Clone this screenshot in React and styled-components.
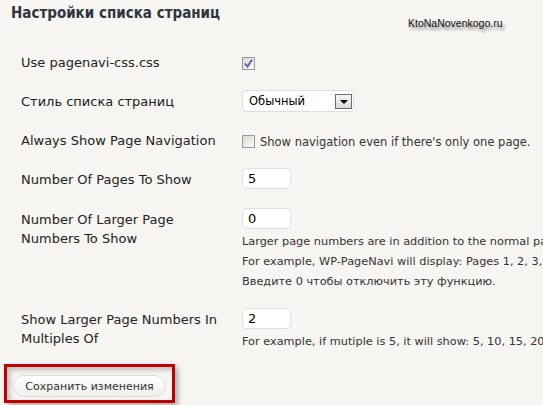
import React from 'react';
import styled, { createGlobalStyle } from 'styled-components';

const GlobalStyle = createGlobalStyle`
  html, body {
    margin: 0;
    padding: 0;
    background: #f6f5f1;
  }
  body {
    font-family: "DejaVu Sans", Verdana, sans-serif;
    color: #222;
    width: 543px;
    height: 405px;
    overflow: hidden;
  }
`;

const Page = styled.div`
  position: relative;
  height: 405px;
  padding-top: 3px;
  box-sizing: border-box;
`;

const Title = styled.h2`
  margin: 0 0 0 11px;
  font-family: "DejaVu Sans Condensed", "DejaVu Sans", Verdana, sans-serif;
  font-stretch: condensed;
  font-size: 15px;
  line-height: 20px;
  font-weight: bold;
  color: #2f3640;
`;

// watermark laid over the page
const Watermark = styled.div`
  position: absolute;
  left: 408px;
  top: 17px;
  font-family: "Liberation Sans", Arial, sans-serif;
  font-size: 10.5px;
  color: #111;
  text-shadow: 2px 3px 3px rgba(0, 0, 0, 0.45);
`;

const Table = styled.div`
  margin-top: 20px;
  padding-left: 21px;
`;

const Row = styled.div`
  display: grid;
  grid-template-columns: 221px 1fr;
  padding: 10px 0 6px;
`;

const Label = styled.div`
  font-size: 13px;
  line-height: 19px;
  padding-top: ${p => p.$offset ?? 2}px;
  color: #222;
`;

const Cell = styled.div`
  min-width: 0;
  white-space: nowrap;
`;

const CheckLine = styled.div`
  display: flex;
  align-items: center;
  gap: 5px;
  height: 21px;
  font-size: 11.5px;
  color: #333;
`;

const Box = styled.span`
  display: inline-flex;
  align-items: center;
  justify-content: center;
  width: 13px;
  height: 13px;
  box-sizing: border-box;
  border: 1px solid #999;
  background: linear-gradient(135deg, #d8d8d2, #fbfbf9);
`;

const Select = styled.div`
  display: flex;
  align-items: center;
  justify-content: space-between;
  width: 112px;
  height: 22px;
  box-sizing: border-box;
  border: 1px solid #dedede;
  border-radius: 4px;
  background: #fff;
  padding-left: 6px;
  margin-bottom: 3px;
  font-size: 11.5px;
  color: #000;
`;

const Arrow = styled.span`
  display: flex;
  align-items: center;
  justify-content: center;
  width: 17px;
  height: 15px;
  box-sizing: border-box;
  margin-right: 1px;
  border: 1px solid #6c6c6c;
  background: linear-gradient(#f6f6f6, #dadada);

  &::after {
    content: '';
    margin-top: 2px;
    border-left: 4px solid transparent;
    border-right: 4px solid transparent;
    border-top: 4px solid #000;
  }
`;

const Input = styled.input`
  display: block;
  width: 49px;
  height: 21px;
  box-sizing: border-box;
  border: 1px solid #dfdfdf;
  border-radius: 4px;
  background: #fff;
  padding: 0 5px;
  margin: 0 0 3px;
  font-family: "DejaVu Sans", Verdana, sans-serif;
  font-size: 13px;
  color: #000;
  outline: none;
`;

const Desc = styled.div`
  font-size: 11.3px;
  line-height: 20px;
  color: #333;
`;

const Frame = styled.div`
  margin: 6px 0 0 4px;
  width: 171px;
  height: 39px;
  box-sizing: border-box;
  border: 3px solid #bd0000;
  padding: 8px 0 0 6px;
  box-shadow: 3px 3px 5px rgba(0, 0, 0, 0.3), inset 3px 3px 5px rgba(0, 0, 0, 0.22);
`;

const Button = styled.button`
  display: block;
  width: 153px;
  height: 22px;
  box-sizing: border-box;
  border: 1px solid #dcdcd8;
  border-radius: 11px;
  background: linear-gradient(#ffffff, #efefeb);
  padding: 0;
  font-family: "DejaVu Sans", Verdana, sans-serif;
  font-size: 11px;
  color: #333;
`;

const Check = () => (
  <svg width="9" height="9" viewBox="0 0 9 9">
    <path d="M1 4.5 L3.5 7.5 L8 0.8" fill="none" stroke="#4a5ea6" strokeWidth="1.8" />
  </svg>
);

export default function App() {
  return (
    <Page>
      <GlobalStyle />
      <Title>Настройки списка страниц</Title>
      <Watermark>KtoNaNovenkogo.ru</Watermark>
      <Table>
        <Row>
          <Label $offset={0}>Use pagenavi-css.css</Label>
          <Cell>
            <CheckLine>
              <Box><Check /></Box>
            </CheckLine>
          </Cell>
        </Row>
        <Row>
          <Label>Стиль списка страниц</Label>
          <Cell>
            <Select>
              Обычный
              <Arrow />
            </Select>
          </Cell>
        </Row>
        <Row>
          <Label $offset={0}>Always Show Page Navigation</Label>
          <Cell>
            <CheckLine>
              <Box />
              Show navigation even if there's only one page.
            </CheckLine>
          </Cell>
        </Row>
        <Row>
          <Label>Number Of Pages To Show</Label>
          <Cell>
            <Input readOnly value="5" />
          </Cell>
        </Row>
        <Row>
          <Label>Number Of Larger Page<br />Numbers To Show</Label>
          <Cell>
            <Input readOnly value="0" />
            <Desc>Larger page numbers are in addition to the normal page numbers. They are useful when there are many pages of posts.</Desc>
            <Desc>For example, WP-PageNavi will display: Pages 1, 2, 3, 4, 5, 10, 20, 30, 40, 50.</Desc>
            <Desc>Введите 0 чтобы отключить эту функцию.</Desc>
          </Cell>
        </Row>
        <Row>
          <Label>Show Larger Page Numbers In<br />Multiples Of</Label>
          <Cell>
            <Input readOnly value="2" />
            <Desc>For example, if mutiple is 5, it will show: 5, 10, 15, 20, 25, 30, 35, 40, 45, 50.</Desc>
          </Cell>
        </Row>
      </Table>
      <Frame>
        <Button>Сохранить изменения</Button>
      </Frame>
    </Page>
  );
}
